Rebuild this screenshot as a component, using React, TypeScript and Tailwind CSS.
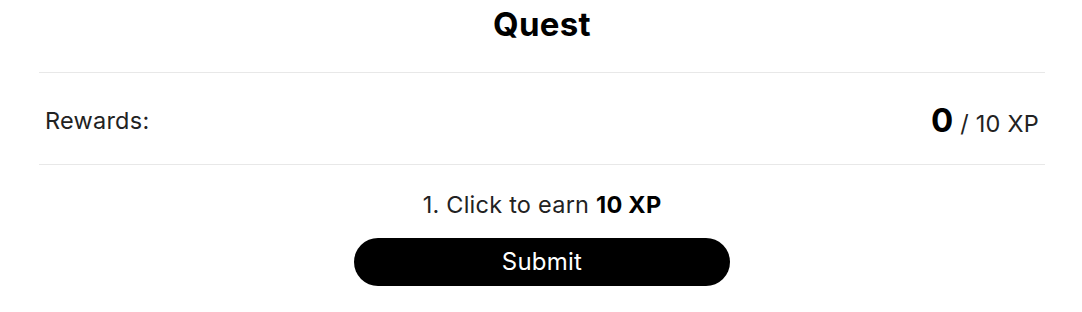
export default function App() {
  return (
    <div className="w-[1082px] h-[312px] bg-white text-black font-['Inter','Liberation_Sans',sans-serif]">
      <div className="ml-[39px] w-[1006px]">
        <h1 className="h-[72px] pt-[4px] text-center text-[33px] font-bold leading-[40px] tracking-[0.01em]">
          Quest
        </h1>
        <div className="flex h-[93px] items-center justify-between border-y border-[#e8e8e8] pl-[6px] pr-[6px] pt-[4px]">
          <span className="text-[23.5px] text-[#222] tracking-[0.01em]">Rewards:</span>
          <span className="flex items-center gap-[7px]">
            <span className="text-[33px] font-bold leading-none">0</span>
            <span className="mt-[6px] text-[23.5px] text-[#222] tracking-[0.01em]">/ 10 XP</span>
          </span>
        </div>
        <div className="flex flex-col items-center pt-[26px]">
          <p className="text-[23.5px] leading-[28px] text-[#222] tracking-[0.01em]">
            1. Click to earn <span className="font-bold text-black">10 XP</span>
          </p>
          <button className="mt-[19px] h-[48px] w-[376px] rounded-full bg-black text-[24px] text-white tracking-[0.01em]">
            Submit
          </button>
        </div>
      </div>
    </div>
  )
}
